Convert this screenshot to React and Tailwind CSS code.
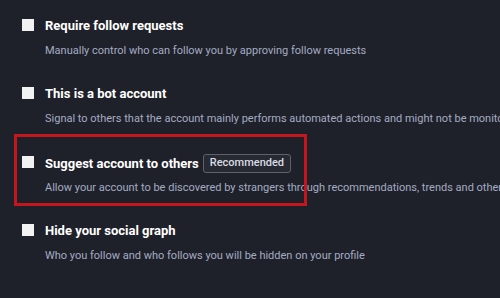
const rows = [
  {
    title: "Require follow requests",
    desc: "Manually control who can follow you by approving follow requests",
  },
  {
    title: "This is a bot account",
    desc: "Signal to others that the account mainly performs automated actions and might not be monitored",
  },
  {
    title: "Suggest account to others",
    badge: "Recommended",
    desc: "Allow your account to be discovered by strangers through recommendations, trends and other features",
    highlight: true,
  },
  {
    title: "Hide your social graph",
    desc: "Who you follow and who follows you will be hidden on your profile",
  },
];

const Row = ({ title, desc, badge, highlight }) => (
  <div className="relative flex items-start gap-[11px]">
    {highlight && (
      <div className="absolute left-[-8px] top-[-20px] w-[293px] h-[72px] border-[3px] border-[#c4161c]" />
    )}
    <div className={`w-3 h-3 shrink-0 bg-[#f2f2f2] ${badge ? "mt-[2px]" : "mt-[1px]"}`} />
    <div className="min-w-0">
      <div className={`flex items-center gap-[4px] ${badge ? "h-[19px]" : "h-4"}`}>
        <span className="text-[13px] leading-4 font-bold text-white">{title}</span>
        {badge && (
          <span className="h-[19px] px-[6px] flex items-center rounded-[3px] border border-[#5c616c] bg-[#272a33] text-[11px] font-medium text-[#d9dde4]">
            {badge}
          </span>
        )}
      </div>
      <p className={`${badge ? "mt-[7px]" : "mt-[9px]"} text-[11px] leading-4 text-[#a4acc2] whitespace-nowrap`}>
        {desc}
      </p>
    </div>
  </div>
);

const App = () => {
  return (
    <div
      className="w-[500px] h-[298px] overflow-hidden bg-[#1f212a] pl-[22px] pt-[18px]"
      style={{ fontFamily: "Roboto, 'Liberation Sans', sans-serif" }}
    >
      <div className="flex flex-col gap-[27px]">
        {rows.map((r) => (
          <Row key={r.title} {...r} />
        ))}
      </div>
    </div>
  );
};

export default App;
